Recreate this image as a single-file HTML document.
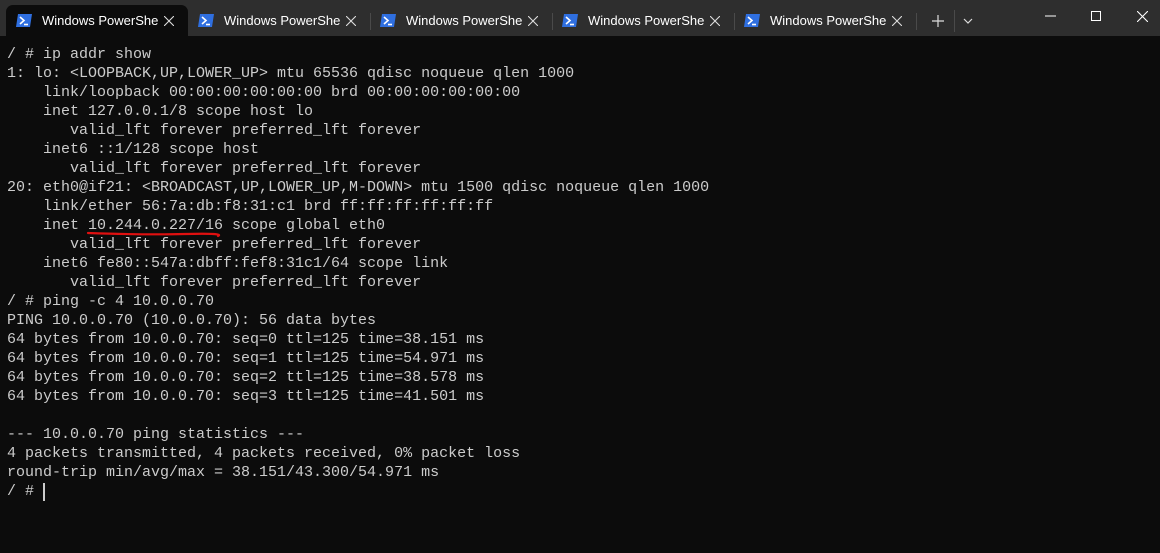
<!DOCTYPE html>
<html><head><meta charset="utf-8"><style>
body{margin:0;width:1160px;height:553px;background:#0c0c0c;overflow:hidden;font-family:"Liberation Sans",sans-serif}
.bar{position:absolute;left:0;top:0;width:1160px;height:36px;background:#2e2e2e}
.tab{position:absolute;top:5px;height:31px;width:182px;color:#fff;font-size:13px}
.tab.act{background:#0c0c0c;border-radius:7px 7px 0 0}
.tab .ic{position:absolute;left:10px;top:9px}
.tab .t{position:absolute;left:36px;top:8px;width:116px;overflow:hidden;white-space:nowrap}
.tab .x{position:absolute;left:158px;top:11px}
.sep{position:absolute;top:13px;width:1px;height:17px;background:#4a4a4a}
pre{position:absolute;left:7px;top:45px;margin:0;font-family:"Liberation Mono",monospace;font-size:15px;line-height:19px;color:#cccccc}
</style></head><body>
<div class="bar">
<div class="tab act" style="left:6px"><svg class="ic" width="16" height="13" viewBox="0 0 16 13"><path d="M2 0H16L14 13H0Z" fill="#2f6fe0"/><path d="M4 3L8 6.5L4 10" stroke="#fff" stroke-width="1.6" fill="none"/><path d="M8 10.5H12" stroke="#fff" stroke-width="1.6"/></svg><span class="t">Windows PowerShell</span><svg class="x" width="10" height="10"><path d="M0 0L10 10M10 0L0 10" stroke="#ddd" stroke-width="1.1"/></svg></div>
<div class="tab" style="left:188px"><svg class="ic" width="16" height="13" viewBox="0 0 16 13"><path d="M2 0H16L14 13H0Z" fill="#2f6fe0"/><path d="M4 3L8 6.5L4 10" stroke="#fff" stroke-width="1.6" fill="none"/><path d="M8 10.5H12" stroke="#fff" stroke-width="1.6"/></svg><span class="t">Windows PowerShell</span><svg class="x" width="10" height="10"><path d="M0 0L10 10M10 0L0 10" stroke="#ddd" stroke-width="1.1"/></svg></div>
<div class="sep" style="left:370px"></div>
<div class="tab" style="left:370px"><svg class="ic" width="16" height="13" viewBox="0 0 16 13"><path d="M2 0H16L14 13H0Z" fill="#2f6fe0"/><path d="M4 3L8 6.5L4 10" stroke="#fff" stroke-width="1.6" fill="none"/><path d="M8 10.5H12" stroke="#fff" stroke-width="1.6"/></svg><span class="t">Windows PowerShell</span><svg class="x" width="10" height="10"><path d="M0 0L10 10M10 0L0 10" stroke="#ddd" stroke-width="1.1"/></svg></div>
<div class="sep" style="left:552px"></div>
<div class="tab" style="left:552px"><svg class="ic" width="16" height="13" viewBox="0 0 16 13"><path d="M2 0H16L14 13H0Z" fill="#2f6fe0"/><path d="M4 3L8 6.5L4 10" stroke="#fff" stroke-width="1.6" fill="none"/><path d="M8 10.5H12" stroke="#fff" stroke-width="1.6"/></svg><span class="t">Windows PowerShell</span><svg class="x" width="10" height="10"><path d="M0 0L10 10M10 0L0 10" stroke="#ddd" stroke-width="1.1"/></svg></div>
<div class="sep" style="left:734px"></div>
<div class="tab" style="left:734px"><svg class="ic" width="16" height="13" viewBox="0 0 16 13"><path d="M2 0H16L14 13H0Z" fill="#2f6fe0"/><path d="M4 3L8 6.5L4 10" stroke="#fff" stroke-width="1.6" fill="none"/><path d="M8 10.5H12" stroke="#fff" stroke-width="1.6"/></svg><span class="t">Windows PowerShell</span><svg class="x" width="10" height="10"><path d="M0 0L10 10M10 0L0 10" stroke="#ddd" stroke-width="1.1"/></svg></div>
<div class="sep" style="left:916px"></div>
<svg style="position:absolute;left:932px;top:15px" width="12" height="12"><path d="M6 0V12M0 6H12" stroke="#ddd" stroke-width="1.2"/></svg>
<div class="sep" style="left:954px;top:10px;height:22px"></div>
<svg style="position:absolute;left:963px;top:18px" width="10" height="6"><path d="M1 1L5 5L9 1" stroke="#ddd" stroke-width="1.2" fill="none"/></svg>
<svg style="position:absolute;left:1045px;top:15px" width="11" height="2"><path d="M0 1H11" stroke="#fff" stroke-width="1"/></svg>
<svg style="position:absolute;left:1091px;top:11px" width="10" height="10"><rect x=".5" y=".5" width="9" height="9" stroke="#fff" fill="none"/></svg>
<svg style="position:absolute;left:1137px;top:11px" width="11" height="11"><path d="M0 0L11 11M11 0L0 11" stroke="#fff" stroke-width="1.1"/></svg>
</div>
<pre>/ # ip addr show
1: lo: &lt;LOOPBACK,UP,LOWER_UP&gt; mtu 65536 qdisc noqueue qlen 1000
    link/loopback 00:00:00:00:00:00 brd 00:00:00:00:00:00
    inet 127.0.0.1/8 scope host lo
       valid_lft forever preferred_lft forever
    inet6 ::1/128 scope host
       valid_lft forever preferred_lft forever
20: eth0@if21: &lt;BROADCAST,UP,LOWER_UP,M-DOWN&gt; mtu 1500 qdisc noqueue qlen 1000
    link/ether 56:7a:db:f8:31:c1 brd ff:ff:ff:ff:ff:ff
    inet 10.244.0.227/16 scope global eth0
       valid_lft forever preferred_lft forever
    inet6 fe80::547a:dbff:fef8:31c1/64 scope link
       valid_lft forever preferred_lft forever
/ # ping -c 4 10.0.0.70
PING 10.0.0.70 (10.0.0.70): 56 data bytes
64 bytes from 10.0.0.70: seq=0 ttl=125 time=38.151 ms
64 bytes from 10.0.0.70: seq=1 ttl=125 time=54.971 ms
64 bytes from 10.0.0.70: seq=2 ttl=125 time=38.578 ms
64 bytes from 10.0.0.70: seq=3 ttl=125 time=41.501 ms

--- 10.0.0.70 ping statistics ---
4 packets transmitted, 4 packets received, 0% packet loss
round-trip min/avg/max = 38.151/43.300/54.971 ms
/ # </pre>
<div style="position:absolute;left:43px;top:483px;width:2px;height:18px;background:#ccc"></div>
<svg style="position:absolute;left:85px;top:228px" width="140" height="12"><path d="M3 5Q60 7 100 6T133 8" stroke="#e01010" stroke-width="2.2" fill="none" stroke-linecap="round"/></svg>
</body></html>
